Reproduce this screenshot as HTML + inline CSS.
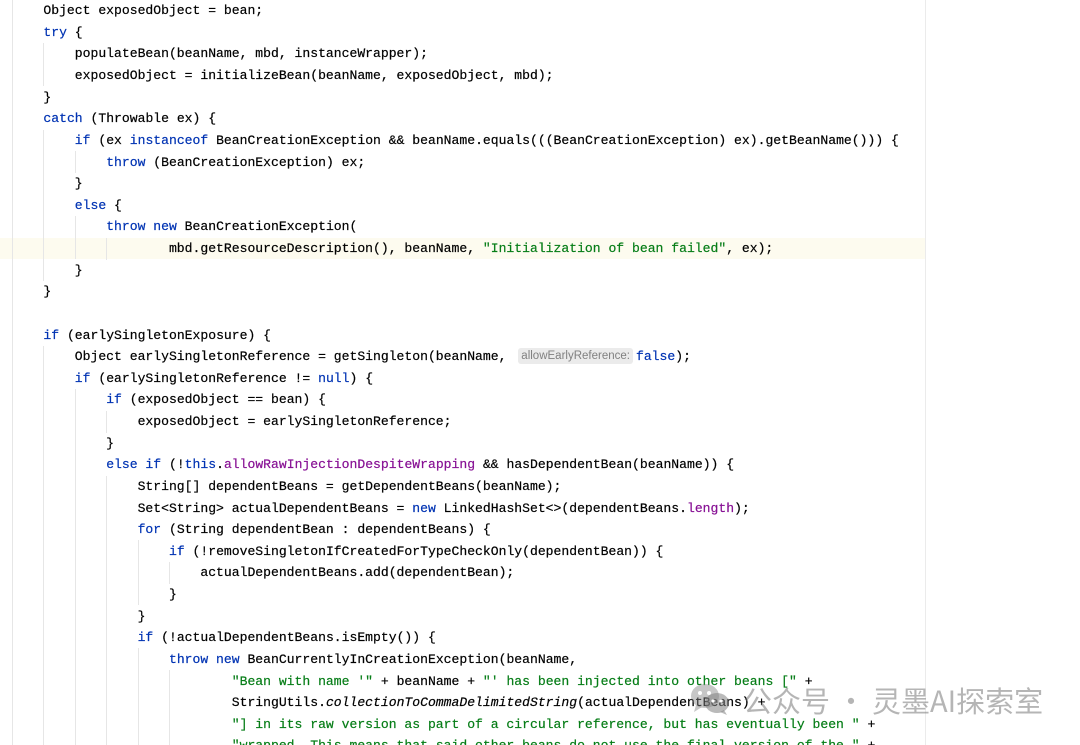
<!DOCTYPE html>
<html><head><meta charset="utf-8"><style>
html,body{margin:0;padding:0;background:#fff;width:1080px;height:745px;overflow:hidden;position:relative}
.l{position:absolute;left:12px;height:21.62px;line-height:21.62px;font-family:"Liberation Mono",monospace;font-size:13.08px;color:#000;white-space:pre;-webkit-text-stroke:0.2px currentColor}
.k{color:#0033b3}.s{color:#067d17}.f{color:#871094}.i{font-style:italic}
.h{display:inline-block;background:#ebebeb;color:#808080;font-family:"Liberation Sans",sans-serif;font-size:11.5px;line-height:16px;padding:0 3px;border-radius:3px;margin:0 3px 0 4px;vertical-align:1px;-webkit-text-stroke:0}
.g{position:absolute;width:1px;background:#e6e6e6}
.cur{position:absolute;left:0;top:237.8px;width:925px;height:21.6px;background:#fdfbef}
.wm{position:absolute;left:743px;top:682px;font-family:"Noto Sans CJK SC",sans-serif;font-size:29px;line-height:36px;color:rgba(120,120,120,0.55);white-space:nowrap}
</style></head><body>
<div class="cur"></div>
<div style="position:absolute;left:925px;top:0;width:1px;height:745px;background:#ebebeb"></div>
<div class="g" style="left:12px;top:0;height:745px"></div>
<div class="g" style="left:43px;top:43px;height:43px"></div>
<div class="g" style="left:43px;top:130px;height:151px"></div>
<div class="g" style="left:43px;top:346px;height:399px"></div>
<div class="g" style="left:75px;top:151px;height:22px"></div>
<div class="g" style="left:75px;top:216px;height:43px"></div>
<div class="g" style="left:75px;top:389px;height:356px"></div>
<div class="g" style="left:106px;top:238px;height:22px"></div>
<div class="g" style="left:106px;top:411px;height:22px"></div>
<div class="g" style="left:106px;top:476px;height:269px"></div>
<div class="g" style="left:138px;top:540px;height:65px"></div>
<div class="g" style="left:138px;top:648px;height:97px"></div>
<div class="g" style="left:169px;top:562px;height:22px"></div>
<div class="g" style="left:169px;top:670px;height:75px"></div>

<div class="l" style="top:0.2px">    Object exposedObject = bean;</div>
<div class="l" style="top:21.8px">    <span class="k">try</span> {</div>
<div class="l" style="top:43.4px">        populateBean(beanName, mbd, instanceWrapper);</div>
<div class="l" style="top:65px">        exposedObject = initializeBean(beanName, exposedObject, mbd);</div>
<div class="l" style="top:86.7px">    }</div>
<div class="l" style="top:108.3px">    <span class="k">catch</span> (Throwable ex) {</div>
<div class="l" style="top:129.9px">        <span class="k">if</span> (ex <span class="k">instanceof</span> BeanCreationException &amp;&amp; beanName.equals(((BeanCreationException) ex).getBeanName())) {</div>
<div class="l" style="top:151.5px">            <span class="k">throw</span> (BeanCreationException) ex;</div>
<div class="l" style="top:173.2px">        }</div>
<div class="l" style="top:194.8px">        <span class="k">else</span> {</div>
<div class="l" style="top:216.4px">            <span class="k">throw new</span> BeanCreationException(</div>
<div class="l" style="top:238px">                    mbd.getResourceDescription(), beanName, <span class="s">"Initialization of bean failed"</span>, ex);</div>
<div class="l" style="top:259.6px">        }</div>
<div class="l" style="top:281.3px">    }</div>
<div class="l" style="top:324.5px">    <span class="k">if</span> (earlySingletonExposure) {</div>
<div class="l" style="top:346.1px">        Object earlySingletonReference = getSingleton(beanName, <span class="h">allowEarlyReference:</span><span class="k">false</span>);</div>
<div class="l" style="top:367.8px">        <span class="k">if</span> (earlySingletonReference != <span class="k">null</span>) {</div>
<div class="l" style="top:389.4px">            <span class="k">if</span> (exposedObject == bean) {</div>
<div class="l" style="top:411px">                exposedObject = earlySingletonReference;</div>
<div class="l" style="top:432.6px">            }</div>
<div class="l" style="top:454.3px">            <span class="k">else if</span> (!<span class="k">this</span>.<span class="f">allowRawInjectionDespiteWrapping</span> &amp;&amp; hasDependentBean(beanName)) {</div>
<div class="l" style="top:475.9px">                String[] dependentBeans = getDependentBeans(beanName);</div>
<div class="l" style="top:497.5px">                Set&lt;String&gt; actualDependentBeans = <span class="k">new</span> LinkedHashSet&lt;&gt;(dependentBeans.<span class="f">length</span>);</div>
<div class="l" style="top:519.1px">                <span class="k">for</span> (String dependentBean : dependentBeans) {</div>
<div class="l" style="top:540.8px">                    <span class="k">if</span> (!removeSingletonIfCreatedForTypeCheckOnly(dependentBean)) {</div>
<div class="l" style="top:562.4px">                        actualDependentBeans.add(dependentBean);</div>
<div class="l" style="top:584px">                    }</div>
<div class="l" style="top:605.6px">                }</div>
<div class="l" style="top:627.2px">                <span class="k">if</span> (!actualDependentBeans.isEmpty()) {</div>
<div class="l" style="top:648.9px">                    <span class="k">throw new</span> BeanCurrentlyInCreationException(beanName,</div>
<div class="l" style="top:670.5px">                            <span class="s">"Bean with name '"</span> + beanName + <span class="s">"' has been injected into other beans ["</span> +</div>
<div class="l" style="top:692.1px">                            StringUtils.<span class="i">collectionToCommaDelimitedString</span>(actualDependentBeans) +</div>
<div class="l" style="top:713.7px">                            <span class="s">"] in its raw version as part of a circular reference, but has eventually been "</span> +</div>
<div class="l" style="top:735.4px">                            <span class="s">"wrapped. This means that said other beans do not use the final version of the "</span> +</div>

<svg style="position:absolute;left:689px;top:682px" width="44" height="34" viewBox="0 0 44 34">
<g fill="rgba(130,130,130,0.45)">
<ellipse cx="16" cy="14" rx="14" ry="12"/>
<path d="M7 23 L5 30 L13 25 Z"/>
<ellipse cx="28" cy="21" rx="12" ry="10" fill="rgba(130,130,130,0.55)"/>
<path d="M35 28 L38 33 L31 30 Z" fill="rgba(130,130,130,0.55)"/>
</g>
<g fill="#fff"><circle cx="11" cy="11" r="2"/><circle cx="20" cy="11" r="2"/><circle cx="24" cy="19" r="1.6"/><circle cx="32" cy="19" r="1.6"/></g>
</svg>
<div class="wm">公众号 · 灵墨AI探索室</div>
</body></html>
